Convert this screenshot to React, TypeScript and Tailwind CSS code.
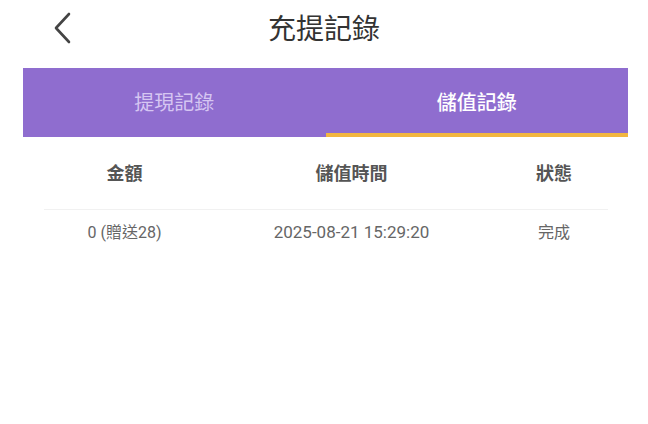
import React from "react";

const cjk = "Roboto, 'Noto Sans CJK TC', 'Noto Sans CJK SC', sans-serif";

export default function App() {
  return (
    <div className="w-[648px] h-[424px] bg-white overflow-hidden" style={{ fontFamily: cjk }}>
      {/* Header */}
      <div className="relative h-[56px] flex items-center justify-center">
        <svg
          className="absolute left-[52px] top-[12px]"
          width="22"
          height="32"
          viewBox="0 0 22 32"
          fill="none"
        >
          <path d="M17 2 L4 16 L17 30" stroke="#444" strokeWidth="2.6" strokeLinecap="round" strokeLinejoin="round" />
        </svg>
        <span className="text-[28px] leading-none text-[#333] mt-[4px]">充提記錄</span>
      </div>

      {/* Tabs */}
      <div className="mt-[12px] ml-[23px] w-[605px] h-[69px] bg-[#8f6dcf] flex">
        <div className="flex-1 flex items-center justify-center text-[20px] text-[#d6c6f2]">提現記錄</div>
        <div className="flex-1 relative flex items-center justify-center text-[20px] font-medium text-white">
          儲值記錄
          <div className="absolute left-0 right-0 bottom-0 h-[4px] bg-[#f2b640]" />
        </div>
      </div>

      {/* Table header */}
      <div className="ml-[44px] w-[566px] h-[72px] grid grid-cols-[161px_293px_112px] items-center text-[18px] font-bold text-[#555]">
        <div className="text-center">金額</div>
        <div className="text-center">儲值時間</div>
        <div className="text-center">狀態</div>
      </div>
      <div className="ml-[44px] w-[564px] h-px bg-[#f1f1f1]" />
      <div className="ml-[44px] w-[566px] h-[46px] grid grid-cols-[161px_293px_112px] items-center text-[16px] text-[#666]">
        <div className="text-center">0 (贈送28)</div>
        <div className="text-center text-[17px]">2025-08-21 15:29:20</div>
        <div className="text-center">完成</div>
      </div>
    </div>
  );
}
